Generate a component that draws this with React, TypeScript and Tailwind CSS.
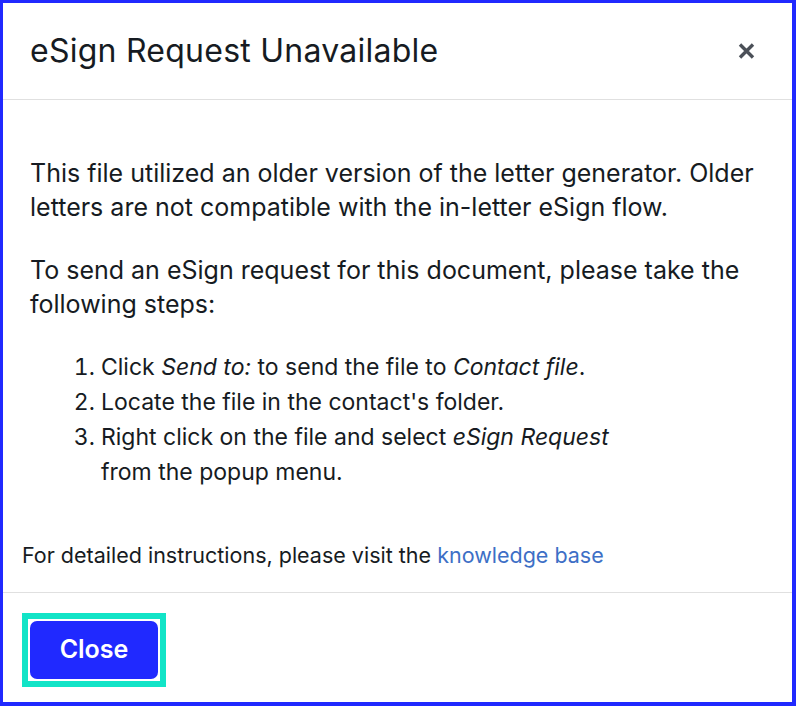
export default function App() {
  return (
    <div
      className="flex h-[706px] w-[796px] flex-col border-[3px] border-r-4 border-b-4 border-[#2029ff] bg-white text-[#161b22]"
      style={{ fontFamily: "Inter, 'Noto Sans', sans-serif" }}
    >
      <div className="flex h-[97px] shrink-0 items-center justify-between border-b border-[#e0e0e0] pl-[27px] pr-[37px]">
        <h1 className="text-[32px] font-normal leading-[40px] tracking-[0.25px]">eSign Request Unavailable</h1>
        <button className="flex h-[18px] w-[18px] items-center justify-center text-[#4b5058]" aria-label="Close">
          <svg width="17" height="16" viewBox="0 0 17 16" fill="none" stroke="currentColor" strokeWidth="3.4">
            <path d="M2 1.5l13 13M15 1.5l-13 13" />
          </svg>
        </button>
      </div>

      <div className="border-b border-[#e0e0e0] pb-[22px] pt-[56px]">
        <div className="px-[27px] text-[25px] leading-[34px]">
          <p className="mb-[29px]">
            This file utilized an older version of the letter generator. Older letters are not compatible with the
            in-letter eSign flow.
          </p>
          <p className="mb-[29px]">
            To send an eSign request for this document, please take the following steps:
          </p>
          <ol className="list-decimal pl-[71px] text-[23px] leading-[35px]">
            <li>
              Click <em>Send to:</em> to send the file to <em>Contact file</em>.
            </li>
            <li>Locate the file in the contact's folder.</li>
            <li>
              Right click on the file and select <em>eSign Request</em>
              <br />
              from the popup menu.
            </li>
          </ol>
        </div>
        <p className="mt-[50px] px-[19px] text-[21.5px] leading-[30px]">
          For detailed instructions, please visit the{" "}
          <a href="#" className="text-[#3d6fc6]">
            knowledge base
          </a>
        </p>
      </div>

      <div className="pl-[19px] pt-[20px]">
        <div className="inline-block border-[6px] border-[#12e4c7] bg-white p-[2px]">
          <button className="block h-[58px] w-[128px] rounded-[7px] bg-[#2029ff] text-[25px] font-semibold text-white">
            Close
          </button>
        </div>
      </div>
    </div>
  );
}
